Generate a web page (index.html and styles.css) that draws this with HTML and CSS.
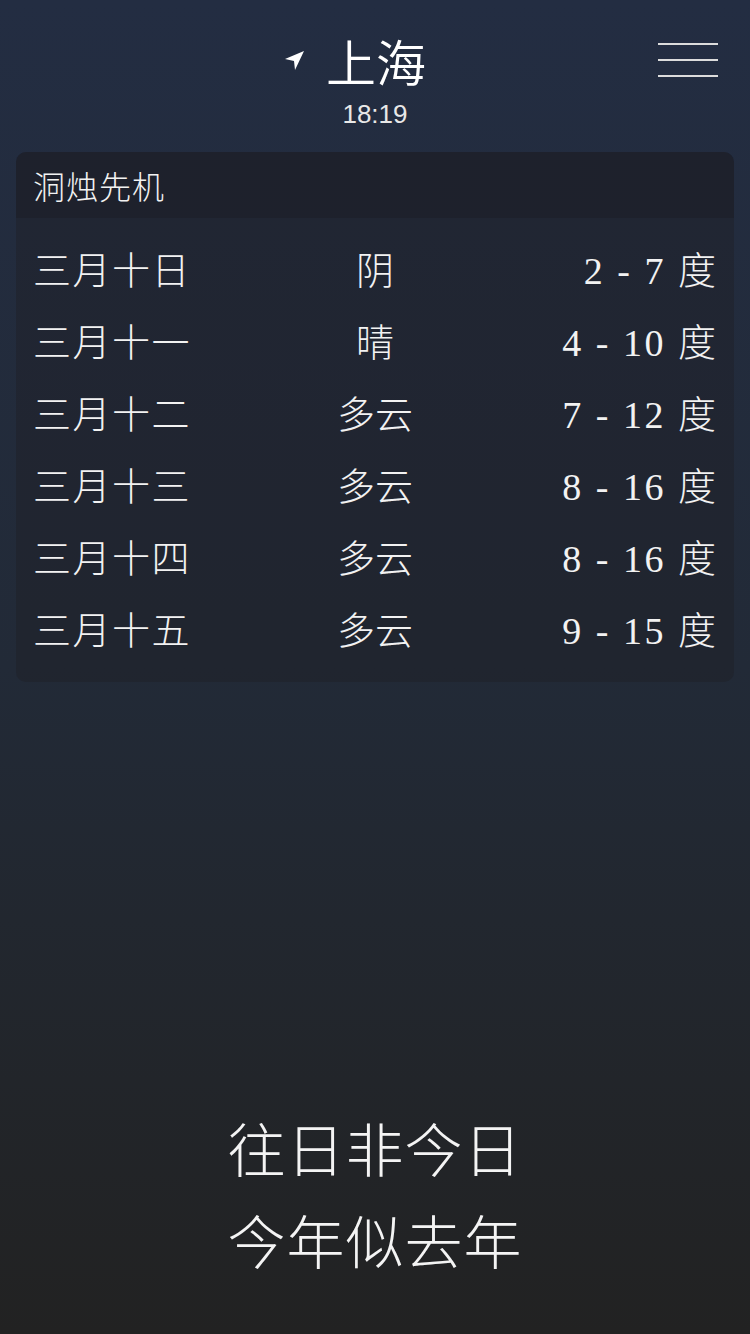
FILE: index.html
```html
<!DOCTYPE html>
<html lang="zh-CN">
<head>
<meta charset="utf-8">
<title>上海</title>
<link rel="stylesheet" href="styles.css">
</head>
<body>
<div class="page">
  <header class="header">
    <div class="side"></div>
    <div class="center">
      <div class="city">
        <svg class="loc" width="20" height="20" viewBox="0 0 20 20"><polygon points="19,1 0,9 9,11 10,20" fill="#fff"/></svg>
        上海
      </div>
      <div class="time">18:19</div>
    </div>
    <div class="side right">
      <div class="menu"><span></span><span></span><span></span></div>
    </div>
  </header>

  <section class="card">
    <div class="card-title">洞烛先机</div>
    <div class="rows">
      <div class="row"><span class="date">三月十日</span><span class="weather">阴</span><span class="temp">2 - 7 度</span></div>
      <div class="row"><span class="date">三月十一</span><span class="weather">晴</span><span class="temp">4 - 10 度</span></div>
      <div class="row"><span class="date">三月十二</span><span class="weather">多云</span><span class="temp">7 - 12 度</span></div>
      <div class="row"><span class="date">三月十三</span><span class="weather">多云</span><span class="temp">8 - 16 度</span></div>
      <div class="row"><span class="date">三月十四</span><span class="weather">多云</span><span class="temp">8 - 16 度</span></div>
      <div class="row"><span class="date">三月十五</span><span class="weather">多云</span><span class="temp">9 - 15 度</span></div>
    </div>
  </section>

  <div class="poem">
    <div>往日非今日</div>
    <div>今年似去年</div>
  </div>
</div>
</body>
</html>
```

FILE: styles.css
```css
html, body {
  margin: 0;
  padding: 0;
}
body {
  background: linear-gradient(to bottom, #232d42 0%, #222a37 50%, #222222 100%);
  color: #f2f2f2;
  font-family: "Liberation Serif", "Noto Sans CJK SC", serif;
}
.page {
  min-height: 1334px;
  display: flex;
  flex-direction: column;
}
.header {
  display: grid;
  grid-template-columns: 1fr auto 1fr;
  padding-top: 30px;
}
.center {
  display: flex;
  flex-direction: column;
  align-items: center;
}
.city {
  position: relative;
  font-family: "Noto Sans CJK SC", sans-serif;
  font-size: 50px;
  line-height: 60px;
  font-weight: 350;
  color: #fff;
  padding-left: 2px;
}
.loc {
  position: absolute;
  left: -39px;
  top: 20px;
}
.time {
  font-family: "Liberation Sans", "Noto Sans CJK SC", sans-serif;
  font-size: 26px;
  line-height: 30px;
  color: #e8e8e8;
  padding-top: 9px;
}
.side.right {
  display: flex;
  justify-content: flex-end;
  padding-right: 32px;
}
.menu {
  display: flex;
  flex-direction: column;
  gap: 14px;
  padding-top: 13px;
}
.menu span {
  display: block;
  width: 60px;
  height: 2px;
  background: #dcdcdc;
}
.card {
  margin: 23px 16px 0;
  border-radius: 10px;
  background: rgba(30, 32, 38, 0.45);
  overflow: hidden;
}
.card-title {
  height: 66px;
  display: flex;
  align-items: center;
  padding-left: 17px;
  font-family: "Noto Sans CJK SC", sans-serif;
  font-weight: 300;
  font-size: 32px;
  letter-spacing: 1px;
  background: rgba(25, 27, 32, 0.35);
}
.rows {
  padding: 13px 18px 19px 17px;
}
.row {
  display: grid;
  grid-template-columns: 1fr 1fr 1fr;
  height: 72px;
  align-items: center;
  font-size: 38px;
  font-weight: 300;
}
.date {
  text-align: left;
  letter-spacing: 1.5px;
}
.weather {
  text-align: center;
  margin-left: 1px;
}
.temp {
  text-align: right;
  letter-spacing: 2.5px;
  margin-right: -2.5px;
}
.poem {
  margin-top: auto;
  padding-bottom: 49px;
  text-align: center;
  font-family: "Noto Sans CJK SC", sans-serif;
  font-weight: 300;
  font-size: 58px;
  letter-spacing: 1px;
  line-height: 92px;
  color: #f4f4f4;
}
```
